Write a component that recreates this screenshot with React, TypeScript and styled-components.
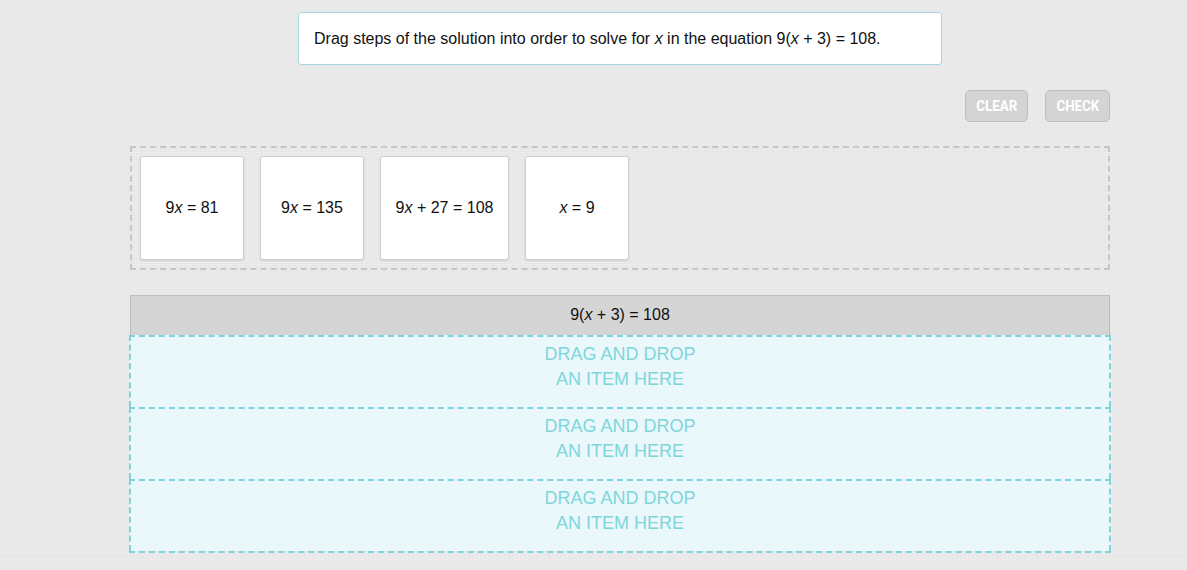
import React from 'react';
import styled, { createGlobalStyle } from 'styled-components';

const GlobalStyle = createGlobalStyle`
  html, body {
    margin: 0;
    padding: 0;
    background-color: #e8e8e8;
    background-image:
      repeating-linear-gradient(0deg, rgba(255,255,255,0.25) 0 1px, transparent 1px 2px),
      repeating-linear-gradient(90deg, rgba(0,0,0,0.02) 0 1px, transparent 1px 2px);
    font-family: "Liberation Sans", Arial, sans-serif;
    color: #111;
  }
`;

const Page = styled.div`
  width: 980px;
  margin-left: 130px;
  padding-top: 12px;
  display: flex;
  flex-direction: column;
`;

const Prompt = styled.div`
  width: 627px;
  height: 51px;
  margin-left: 168px;
  padding-left: 15px;
  background: #fff;
  border: 1px solid #a6d8de;
  border-radius: 3px;
  display: flex;
  align-items: center;
  font-size: 16px;
`;

const Toolbar = styled.div`
  margin-top: 25px;
  display: flex;
  justify-content: flex-end;
  gap: 17px;
`;

const ActionBtn = styled.button<{ $w: number }>`
  width: ${(p) => p.$w}px;
  height: 32px;
  padding: 0;
  background: #d4d4d4;
  border: 1px solid #bfbfbf;
  border-radius: 5px;
  display: flex;
  align-items: center;
  justify-content: center;
  color: #fff;
  font-family: Roboto, "Liberation Sans", sans-serif;
  font-weight: 700;
  font-size: 15.5px;
`;

const BtnLabel = styled.span`
  display: inline-block;
  transform: scaleX(0.86);
`;

const Tray = styled.div`
  margin-top: 24px;
  height: 124px;
  box-sizing: border-box;
  border: 2px dashed #c6c6c6;
  padding: 8px;
  display: flex;
  gap: 16px;
`;

const Card = styled.div<{ $wide?: boolean }>`
  width: ${(p) => (p.$wide ? 129 : 104)}px;
  height: 104px;
  box-sizing: border-box;
  background: #fff;
  border: 1px solid #cfcfcf;
  border-radius: 3px;
  box-shadow: 0 1px 2px rgba(0, 0, 0, 0.12);
  display: flex;
  align-items: center;
  justify-content: center;
  font-size: 16px;
`;

const Header = styled.div`
  margin-top: 25px;
  height: 40px;
  box-sizing: border-box;
  padding-bottom: 2px;
  background: #d5d5d5;
  border: 1px solid #bcbcbc;
  border-bottom: none;
  display: flex;
  align-items: center;
  justify-content: center;
  font-size: 16px;
`;

const DropList = styled.div`
  margin: 0 -1px;
  border-bottom: 2px dashed #7fd4da;
`;

const DropZone = styled.div`
  height: 72px;
  box-sizing: border-box;
  background: #eaf8fc;
  border: 2px dashed #7fd4da;
  border-bottom: none;
  padding-top: 5px;
  text-align: center;
  color: #7fd6da;
  font-size: 18px;
  line-height: 25px;
`;

const Var = styled.i`
  font-style: italic;
`;

const App: React.FC = () => {
  const zones = [1, 2, 3];

  return (
    <>
      <GlobalStyle />
      <Page>
        <Prompt>
          <span>
            Drag steps of the solution into order to solve for <Var>x</Var> in the equation 9(
            <Var>x</Var> + 3) = 108.
          </span>
        </Prompt>
        <Toolbar>
          <ActionBtn $w={63}>
            <BtnLabel>CLEAR</BtnLabel>
          </ActionBtn>
          <ActionBtn $w={65}>
            <BtnLabel>CHECK</BtnLabel>
          </ActionBtn>
        </Toolbar>
        <Tray>
          <Card>
            <span>
              9<Var>x</Var> = 81
            </span>
          </Card>
          <Card>
            <span>
              9<Var>x</Var> = 135
            </span>
          </Card>
          <Card $wide>
            <span>
              9<Var>x</Var> + 27 = 108
            </span>
          </Card>
          <Card>
            <span>
              <Var>x</Var> = 9
            </span>
          </Card>
        </Tray>
        <Header>
          <span>
            9(<Var>x</Var> + 3) = 108
          </span>
        </Header>
        <DropList>
          {zones.map((z) => (
            <DropZone key={z}>
              DRAG AND DROP
              <br />
              AN ITEM HERE
            </DropZone>
          ))}
        </DropList>
      </Page>
    </>
  );
};

export default App;
